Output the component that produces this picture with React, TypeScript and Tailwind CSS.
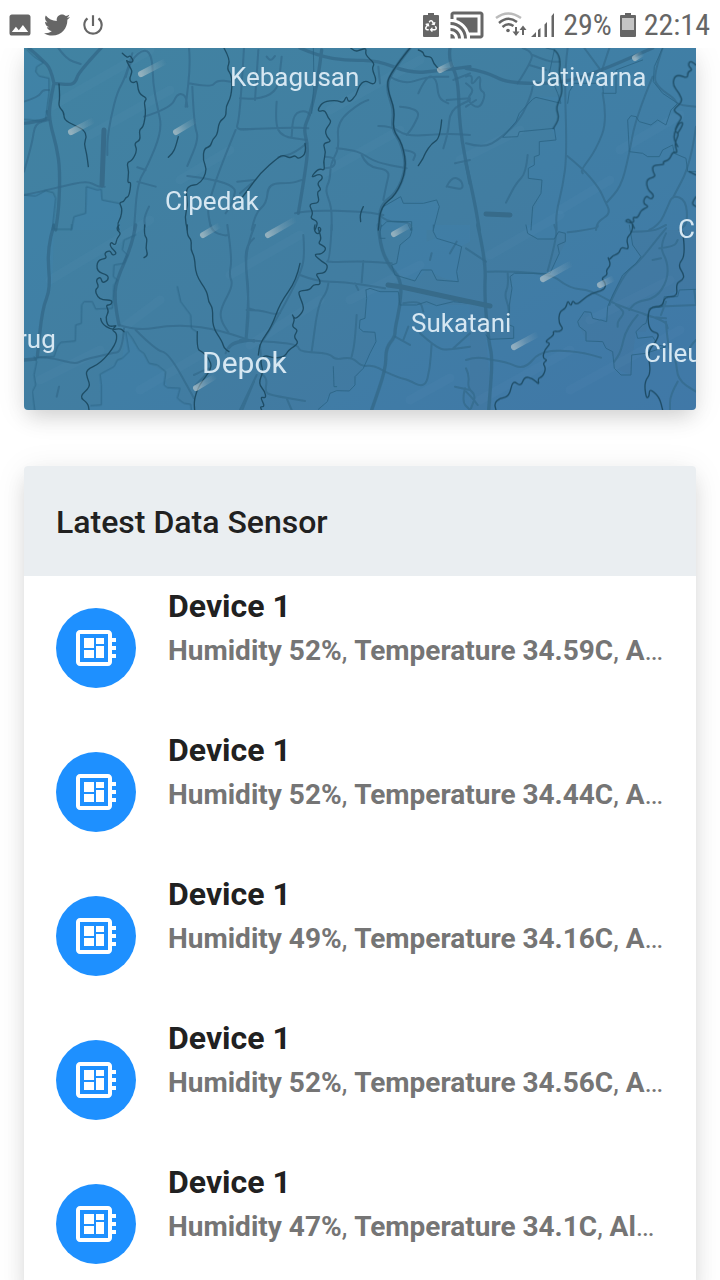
import { MdCastConnected, MdDeveloperBoard, MdImage, MdPowerSettingsNew } from "react-icons/md";
import { FaRecycle, FaTwitter } from "react-icons/fa";

type Tile = {
  x: number;
  y: number;
  areas: string[];
  roads: string[];
  lanes: string[];
  borders: string[];
  rivers: string[];
};

// Each tile holds its line work in thirds of a map unit, measured from the tile's corner.
const tiles: Tile[] = [
  {
    x: 24,
    y: 40,
    areas: [
      "M0 30L30 50L58 70L38 80L35 95L45 108L75 115L75 160L65 238L0 238Z",
      "M0 465L60 455L95 470L92 570L0 570Z",
      "M142 570L150 530L185 520L187 440L232 448L234 480L285 490L290 570Z",
    ],
    roads: [
      "M235 20L165 95L155 125L140 135L90 130",
      "M90 130L80 85L55 60L15 24",
      "M90 130L75 200L78 250L98 320L108 390L105 500L95 570",
      "M0 250L80 240L70 215",
    ],
    lanes: [
      "M305 112L318 60L365 24L385 55L387 130L400 200L415 270L370 380L340 430L330 570",
      "M100 20L125 57L170 72",
      "M0 185L45 170L55 150L75 150M0 395L25 310L32 250L75 240",
      "M325 40L305 112L280 155L260 235L250 300L250 345",
      "M360 230L440 205L460 160L485 165L490 200M495 24L500 70L485 200",
      "M495 130L560 143L580 120L620 125M505 140L510 255L525 295L490 378",
      "M0 465L50 455L110 440L190 422L220 440L242 440",
      "M340 382L365 390M340 425L395 440M375 500L360 530L363 560",
      "M660 24L655 110L645 240L635 270L690 267M635 270L590 380L560 470L550 510L560 560",
      "M490 408L640 425L625 490L605 520M640 425L690 420",
    ],
    borders: [
      "M8 28L30 50L58 68L38 80L35 95L45 108L75 115L75 160L65 238L50 243L0 238",
      "M142 570L150 530L185 520L187 440L220 450L232 448L234 480L285 490",
      "M0 465L35 468L65 452L88 458L95 475L85 570",
    ],
    rivers: [
      "M295 40L310 55L318 45L330 65L315 68L305 58L320 85L325 95L315 120L328 130L340 120L343 160L370 175L360 185L365 210L363 235L357 262L345 270L350 300L330 310L340 330L325 362L308 368L315 395L310 430L322 425L315 470L305 472L300 485L285 488L295 505L290 535L280 550L285 570",
      "M105 132L108 170L103 200L120 215L120 240L150 255L180 270L188 290L180 310L188 340L193 380",
      "M600 24L620 60L608 85L625 110L622 170L605 200L607 230L585 245L580 285L565 298L560 320L540 325L537 360L548 385L540 415L520 435L500 435L485 450L492 495L482 530L490 570",
      "M463 290L455 322L445 340L433 352",
    ],
  },
  {
    x: 240,
    y: 40,
    areas: ["M420 570L430 500L482 470L490 490L590 480L598 500L585 570Z"],
    roads: [
      "M180 24L235 48L320 62L410 60L510 100L600 92L690 80",
      "M245 30L235 115L210 225L190 265L205 320L195 400L175 520",
      "M510 24L450 100L440 150L463 210L455 265L485 310L500 385L470 460L420 495L418 570",
      "M630 24L625 60L655 115L658 260L690 430",
    ],
    lanes: [
      "M165 520L200 510L370 515L430 525",
      "M0 175L110 185L125 50M110 185L105 250L125 290L200 300M55 30L45 180M80 50L90 65L105 48M0 268L150 262L205 265",
      "M210 225L200 210L160 220L155 290M200 310L165 340L115 352",
      "M385 180L365 185L290 245L298 325L272 370L270 420L255 450L275 500L275 570",
      "M290 325L335 330L365 340L410 368L500 385M365 345L380 380L450 390L440 430L430 480",
      "M255 350L285 350L285 380L255 385M450 110L490 135L560 110L625 110M480 200L545 205L520 260L500 285M535 160L560 105L590 115L595 175L625 190",
      "M415 258L455 258L500 290L620 280L690 285M490 330L530 335L520 360M610 325L625 280L630 210L690 180",
      "M640 120L690 100M620 180L690 175M620 440L635 410L665 420L670 450L625 440M415 80L420 130M645 370L690 360",
      "M35 570L45 520L80 490L85 430L155 430L185 420M0 460L35 430",
      "M420 525L435 545L510 545L515 570",
    ],
    borders: [
      "M220 24L222 130L215 220",
      "M430 500L482 470L490 490L550 490L590 480L598 500L580 570",
      "M425 560L440 545L515 545L515 570",
    ],
    rivers: [
      "M332 24L345 35L360 30L380 24L375 45L405 70L395 85L410 120L400 135L375 120L355 140L350 165L325 190L320 165L310 190L290 180L250 185L235 205L235 215L255 210L265 235L275 245L255 270L260 290L275 305L248 310L258 335L250 365L255 392L235 385L210 415L240 400L250 415L230 430L245 450L230 455L240 490L205 490L220 520L210 535L235 545L225 570",
      "M510 24L445 105L442 148L465 210L457 268L488 312L500 388L468 465L422 500L415 570",
      "M535 30L550 35L552 50L575 50L580 70L600 90",
      "M605 240L600 295L575 310L555 340L550 355L535 377",
      "M195 310L200 340L175 358L165 345L150 355L130 345L115 352L60 400L20 455L0 480",
      "M370 500L360 520L362 545",
    ],
  },
  {
    x: 466,
    y: 40,
    areas: [
      "M110 290L155 240L200 170L280 185L280 240L255 265L270 300L220 305L220 350L185 380L190 415L228 420L225 460L200 520L195 570L690 570L690 24L590 24L300 24L300 170L200 170Z",
    ],
    roads: [
      "M0 85L60 95L125 130L280 130L385 100L560 24",
      "M0 370L25 480L40 570",
    ],
    lanes: [
      "M355 24L400 85M430 24L405 100",
      "M590 24L560 110L580 145L625 175L635 195L690 200",
      "M155 130L200 60L195 35L170 24M200 45L245 65L280 65M190 75L240 90",
      "M305 24L295 90L303 345L290 440L270 520L272 570",
      "M300 345L350 385L400 445L415 480L435 520L395 545L390 570",
      "M410 160L425 240L390 330L345 390L350 400",
      "M560 110L510 230L488 350L465 440L420 490",
      "M0 310L50 325L105 295L165 235L195 165L200 140",
      "M185 345L180 400L150 430L120 488",
      "M0 110L20 100L15 140L45 100L40 150L60 160L40 210L0 180L25 150L0 130M0 200L30 180",
      "M550 570L580 555L605 500L620 465L660 480L665 550L640 570M690 260L675 370L620 475",
    ],
    borders: [
      "M240 24L265 30L250 100L275 160L285 190L210 172L200 178L160 220L150 245L110 292L155 290L160 275L265 265L270 300L220 305L220 345L205 350L205 375L187 385L187 415L228 420L225 460L200 500L195 570",
      "M305 190L310 155L325 130L410 130L412 160L450 160L450 90L530 60",
      "M510 230L495 227L485 240L490 335L530 340L545 350L580 350L590 330L620 315L625 340L660 355L665 395L690 395",
      "M510 230L520 245L555 255L575 240L600 255L615 210L635 190L590 160L562 125L565 80L590 24",
    ],
    rivers: [
      "M265 30L278 40L283 75L278 95L290 150L280 180L270 205L280 235L262 265",
      "M690 75L675 60L665 75L680 90L665 95L665 115L640 105L625 110L620 135L640 160L650 185L625 205L625 215L650 230L635 250L625 275L640 280L625 310L635 340L620 335L610 360L590 365L595 375L560 375L560 395L570 410L540 418L545 450L565 465L555 480L540 465L530 490L550 500L525 510L515 535L500 530L505 550L475 545L490 535L505 565",
      "M635 280L655 250L640 245L620 290L635 320",
      "M670 395L690 405M690 470L675 490L690 500",
    ],
  },
  {
    x: 24,
    y: 225,
    areas: [
      "M0 0L90 0L85 180L55 250L35 400L0 400Z",
      "M305 325L350 380L375 415L420 440L430 485L470 490L465 530L505 540L510 560L200 560L195 540L230 540L225 450L295 400Z",
    ],
    roads: [
      "M90 0L68 70L80 190L55 250L40 395",
      "M335 0L325 60L275 170L272 230L285 300",
      "M0 405L35 402",
    ],
    lanes: [
      "M285 300L340 318L440 300L560 307L690 350",
      "M335 315L395 375L435 385L510 520",
      "M300 310L295 380L260 385L175 405L155 418L90 400L40 395",
      "M610 0L625 100L615 150L628 180L590 250L590 285L615 325M690 40L665 60L665 130L675 190L665 340",
      "M560 0L565 20L600 32L615 30M615 370L625 355L690 345",
      "M655 555L690 470M105 485L98 515",
      "M510 450L560 425L555 440L515 480",
      "M605 385L615 350L690 345M675 250L690 255",
    ],
    borders: [
      "M335 30L300 45L295 75L310 90L300 115L270 120L268 155L280 165L270 180L265 250L215 252L205 230L180 230L173 240L172 295L155 300L154 348L110 352L100 365L90 395L70 395L35 400",
      "M305 320L315 380L295 400L280 405L270 425L228 448L232 480L232 540L200 542",
      "M310 320L325 340L345 375L360 385L375 415L400 420L425 440L420 480L430 488L468 490L460 520L480 535L500 538L502 555",
      "M90 0L90 13L143 13L143 0",
      "M30 395L38 410L30 450L35 480L25 500L32 555",
      "M460 185L470 230L500 270L502 310L518 320",
    ],
    rivers: [
      "M285 0L275 12L292 25L278 40L275 62L260 50L258 65L280 85L265 92L258 75L240 85L250 100L220 105L218 140L252 150L253 165L235 175L230 155L215 165L225 185L213 195L220 215L235 225L265 225L262 240L245 240L255 260L245 275L250 300L262 305L280 300L262 315L280 325L275 360L230 415L185 435L190 460L200 485L165 515L192 535L195 555",
      "M230 280L232 295L262 315L290 310L300 320",
      "M362 0L360 30L370 40L365 70L372 90L360 98",
      "M490 0L488 30L503 45L500 75L512 95L515 150L550 200L553 230L567 250L565 305L595 350L600 370L615 380",
      "M520 320L518 372L535 380L555 400L565 430L525 480L510 525L512 555",
    ],
  },
  {
    x: 240,
    y: 225,
    areas: [
      "M420 0L510 0L510 30L480 60L470 115L455 130L490 155L530 165L560 135L610 160L655 170L660 65L690 50L690 0L580 0L585 40L560 50L560 10Z",
      "M378 195L475 200L480 240L690 240L690 555L240 555L265 510L290 497L330 497L365 430L405 350L405 320L360 320L358 285L378 280Z",
    ],
    roads: [
      "M415 0L420 60L445 120L485 165L480 245L465 310L465 335L437 370L438 430L395 555",
    ],
    lanes: [
      "M190 30L195 90L180 150L120 265L70 345",
      "M275 0L270 105L255 112L370 108L455 115M180 150L230 170L310 170L435 190M370 108L365 172M345 175L355 195",
      "M45 0L20 60L18 150L28 250L20 340M20 255L60 255L100 268L120 265M0 345L100 350L175 360L178 380L270 385L285 405L335 395L365 425L400 420L435 440",
      "M265 175L262 200L235 235L215 380M350 270L345 350L335 395",
      "M435 440L480 460L500 463L555 490L570 430L575 355M465 335L510 360M490 345L505 305M540 325L590 370L625 375L690 365M640 370L690 325",
      "M60 360L65 410L55 440L82 460L75 500L90 510L195 528M140 520L155 555",
      "M0 555L50 450M575 85L570 105M630 85L650 50M645 485L690 495M675 490L665 530L690 555M490 235L540 225L550 260",
    ],
    borders: [
      "M505 0L515 20L510 35L480 60L470 115L455 120L465 150L525 168L545 135L575 135L590 165L655 170L650 140L665 65L640 55L590 40L580 20L580 0",
      "M378 195L390 190L420 200L475 200L480 240L530 240L560 230L590 242L640 230L690 235",
      "M378 195L380 220L375 280L360 285L358 310L370 320L405 322L408 350L390 385L370 430L345 455L345 480L328 498L290 497L270 505L262 530L235 553",
      "M280 425L282 485L290 485",
      "M425 0L420 20L420 40L435 40",
    ],
    rivers: [
      "M225 0L220 15L235 30L245 10L232 5L245 40L235 55L245 60L260 70L245 88L220 87L245 110L265 120L255 145L225 145L240 165L240 180L220 178L210 195L180 197L175 205L190 240L190 260L165 285L155 265L165 285L155 305L175 315L160 335L178 355L145 375L135 395L100 400L75 390L60 405L70 440L55 475L75 500L78 520L60 515L75 545L60 545L65 555",
      "M180 115L170 165L120 235L95 305L60 355L55 390",
    ],
  },
  {
    x: 466,
    y: 225,
    areas: [
      "M180 0L185 25L220 45L270 40L275 20L300 22L300 50L250 140L140 145L132 280L145 340L60 345L80 555L690 555L690 190L635 195L595 215L590 245L550 245L540 320L510 320L500 390L495 450L445 430L445 400L410 350L360 345L335 290L360 260L380 280L420 290L430 230L470 150L525 100L500 60L490 0Z",
    ],
    roads: ["M35 0L60 110L55 210L68 350L80 400L68 555"],
    lanes: [
      "M65 140L245 138L310 190L375 195L450 240L530 265L600 290L605 310",
      "M0 225L45 235",
      "M600 25L580 65L605 110L605 165L570 220L510 230L490 255",
      "M245 138L275 30L265 0M0 70L60 110M305 22L395 10L395 0",
      "M125 145L128 180L115 210L130 250L125 275M80 405L120 410L175 435L225 375L340 380L405 398",
      "M450 240L465 250L475 265L455 290L455 305M515 270L480 310L465 380L445 410M430 240L470 150L520 110L575 40L600 10",
      "M560 105L585 100M580 70L625 65L635 45M565 245L690 240M600 230L585 270M600 290L605 370L630 400L635 465L690 500M635 470L612 510L612 555",
      "M530 265L545 275L600 280M500 20L560 20L600 0M685 195L690 240M690 345L665 370L670 400",
      "M0 405L30 395L80 405M0 430L10 450L5 490L30 510L15 550M0 500L20 520L35 540",
    ],
    borders: [
      "M180 0L185 25L215 42L265 42L278 20L298 25L298 50L275 60L280 85L252 145L145 145L132 155L138 190L130 240L130 300L143 305L143 340L70 343L60 330",
      "M490 0L500 60L525 95L510 115L470 150L440 210L425 245L422 290L405 285L400 285L380 280L375 262L355 260L335 290L340 305L360 320L360 348L410 350L420 370L440 380L445 430L465 450L495 450L497 390L540 385L600 365L575 360L560 335L515 340L510 320L530 300L540 295L550 250L590 245L595 215L635 215L640 195L690 193",
    ],
    rivers: [
      "M500 0L500 20L480 40L490 75L465 65L460 85L440 92L430 105L425 95L435 120L420 135L425 150L405 160L420 175L415 195L375 205L350 225L330 240L320 225L315 245L305 225L300 250L280 260L278 295L292 310L280 320L260 318L265 330L235 350L255 355L235 375L230 400L245 405L230 415L240 430L230 455L215 460L220 480L200 460L175 455L165 485L140 465L130 515L100 520L85 535L90 555",
      "M650 20L660 90L635 120L655 150L650 165L630 175L635 215L595 215L590 245L550 245L545 290L555 320L580 325L570 350L545 380L555 445L535 470L540 520L550 515L550 490L580 515L590 555",
    ],
  },
];

// Rounds the corners of "M x y L x y ..." paths by curving between segment midpoints.
function smooth(paths: string[]) {
  return paths
    .join("")
    .split("M")
    .filter(Boolean)
    .map((line) => {
      const points = line.split("L").map((pair) => pair.trim().split(" ").map(Number));
      const last = points[points.length - 1];
      let d = `M${points[0][0]} ${points[0][1]}`;
      for (let i = 1; i < points.length - 1; i++) {
        const [x, y] = points[i];
        const [nx, ny] = points[i + 1];
        d += `Q${x} ${y} ${(x + nx) / 2} ${(y + ny) / 2}`;
      }
      return `${d}L${last[0]} ${last[1]}`;
    })
    .join("");
}

type Layer = {
  key: "lanes" | "roads" | "borders" | "rivers";
  color: string;
  width: number;
  opacity: number;
  curved: boolean;
};

const layers: Layer[] = [
  { key: "lanes", color: "#346b8c", width: 6, opacity: 0.75, curved: true },
  { key: "roads", color: "#346a8a", width: 10, opacity: 0.8, curved: true },
  { key: "borders", color: "#2b6384", width: 3, opacity: 0.8, curved: false },
  { key: "rivers", color: "#1b485f", width: 4, opacity: 0.9, curved: true },
];

const gusts = [
  [141, 74, 166, 61],
  [71, 132, 94, 120],
  [176, 132, 196, 120],
  [203, 235, 220, 225],
  [268, 235, 296, 219],
  [394, 234, 412, 224],
  [440, 70, 454, 63],
  [543, 279, 572, 263],
  [600, 285, 614, 278],
  [514, 347, 538, 334],
  [196, 388, 216, 376],
  [635, 58, 643, 53],
];

const haze = [
  [52, 106, 150, 50], [50, 280, 150, 220], [90, 135, 170, 90], [120, 330, 160, 300], [230, 275, 300, 235],
  [320, 175, 400, 130], [250, 345, 320, 300], [410, 400, 450, 378], [460, 160, 520, 130], [490, 255, 560, 215],
  [560, 210, 610, 180], [480, 400, 570, 350], [570, 390, 680, 330], [590, 320, 670, 280], [330, 110, 420, 60],
  [180, 180, 230, 150], [40, 380, 100, 350], [620, 150, 680, 115], [350, 300, 420, 265], [140, 390, 200, 355],
];

const places = [
  { name: "Kebagusan", x: 230, y: 86, major: false },
  { name: "Jatiwarna", x: 532, y: 86, major: false },
  { name: "Cipedak", x: 165, y: 210, major: false },
  { name: "Sukatani", x: 411, y: 332, major: false },
  { name: "Depok", x: 202, y: 373, major: true },
  { name: "rug", x: 18, y: 348, major: false },
  { name: "Cileu", x: 644, y: 362, major: false },
  { name: "C", x: 678, y: 238, major: false },
];

const readings = [
  { humidity: "52%", temperature: "34.59C" },
  { humidity: "52%", temperature: "34.44C" },
  { humidity: "49%", temperature: "34.16C" },
  { humidity: "52%", temperature: "34.56C" },
  { humidity: "47%", temperature: "34.1C" },
];

function WeatherMap() {
  return (
    <svg viewBox="24 48 672 362" className="block w-full rounded-b" role="img" aria-label="Wind map around Depok">
      <defs>
        <linearGradient id="base" x1="0" y1="0" x2="1" y2="1">
          <stop offset="0" stopColor="#4183a2" />
          <stop offset="0.55" stopColor="#417da1" />
          <stop offset="1" stopColor="#4175a3" />
        </linearGradient>
        {gusts.map(([x1, y1, x2, y2], i) => (
          <linearGradient key={i} id={`gust${i}`} gradientUnits="userSpaceOnUse" x1={x1} y1={y1} x2={x2} y2={y2}>
            <stop offset="0" stopColor="#c8d0d0" stopOpacity="0.6" />
            <stop offset="0.5" stopColor="#c8d0d0" stopOpacity="0.22" />
            <stop offset="1" stopColor="#c8d0d0" stopOpacity="0" />
          </linearGradient>
        ))}
      </defs>
      <rect x="24" y="48" width="672" height="362" fill="url(#base)" />
      <g fill="#4285b4" opacity="0.22">
        {tiles.map((tile, i) => (
          <path key={i} transform={`translate(${tile.x} ${tile.y}) scale(0.3333)`} d={tile.areas.join("")} />
        ))}
      </g>
      <g stroke="#6fa5c4" strokeOpacity="0.06" strokeWidth="9" strokeLinecap="round">
        {haze.map(([x1, y1, x2, y2], i) => (
          <line key={i} x1={x1} y1={y1} x2={x2} y2={y2} />
        ))}
      </g>
      {layers.map((layer) => (
        <g
          key={layer.key}
          fill="none"
          stroke={layer.color}
          strokeWidth={layer.width}
          opacity={layer.opacity}
          strokeLinejoin="round"
          strokeLinecap="round"
        >
          {tiles.map((tile, i) => (
            <path
              key={i}
              transform={`translate(${tile.x} ${tile.y}) scale(0.3333)`}
              d={layer.curved ? smooth(tile[layer.key]) : tile[layer.key].join("")}
            />
          ))}
        </g>
      ))}
      <path d="M104 130L102 185M486 214L510 215M388 285L402 287L466 301L490 306" fill="none" stroke="#376b8a" strokeWidth="5" strokeLinecap="round" />
      {gusts.map(([x1, y1, x2, y2], i) => (
        <line key={i} x1={x1} y1={y1} x2={x2} y2={y2} stroke={`url(#gust${i})`} strokeWidth="6" strokeLinecap="round" />
      ))}
      <g fill="#d6e7f2" fontFamily="Roboto, sans-serif">
        {places.map((place) => (
          <text key={place.name} x={place.x} y={place.y} fontSize={place.major ? 30 : 26}>
            {place.name}
          </text>
        ))}
      </g>
    </svg>
  );
}

function BatterySaverIcon() {
  return (
    <svg viewBox="0 0 16 24" className="h-6 w-4" aria-hidden="true">
      <path d="M5 0h6v2h4q1 0 1 1v20q0 1-1 1H1q-1 0-1-1V3q0-1 1-1h4z" fill="#666" />
      <FaRecycle x="2" y="7" size={12} color="#fff" />
    </svg>
  );
}

function WifiIcon() {
  return (
    <svg viewBox="0 0 32 26" className="h-6.5 w-8" fill="none" stroke="#666" aria-hidden="true">
      <path d="M1 6Q13-3 26 6" stroke="#bbb" strokeWidth="2.400" />
      <path d="M4 11Q13 3 22 10M7.500 15Q13 10 18.500 14" strokeWidth="2.400" />
      <circle cx="13" cy="18.500" r="1.800" fill="#666" stroke="none" />
      <path d="M21 15v8M28 23v-8" strokeWidth="2" />
      <path d="M17.500 19.500h7L21 24zM24.500 18h7L28 13.500z" fill="#666" stroke="none" />
    </svg>
  );
}

function SignalIcon() {
  return (
    <svg viewBox="0 0 24 24" className="size-6" fill="#666" aria-hidden="true">
      <path d="M0 24l5-5v5zM7 17l2.500-2v9H7zM13.500 11.500L16 9v15h-2.500zM20.500 3L23 0v24h-2.500z" />
    </svg>
  );
}

function BatteryIcon() {
  return (
    <svg viewBox="0 0 16 24" className="h-6 w-4" aria-hidden="true">
      <path d="M5 0h6v2h4q1 0 1 1v20q0 1-1 1H1q-1 0-1-1V3q0-1 1-1h4z" fill="#666" />
      <path d="M2 5h12v12H2z" fill="#c4c4c4" />
    </svg>
  );
}

function StatusBar() {
  return (
    <header className="z-10 flex h-12 shrink-0 items-center justify-between bg-white pt-0.5 pr-2.5 pl-1.5 text-[#666]">
      <div className="flex items-center gap-2.5">
        <MdImage className="size-7" />
        <FaTwitter className="size-6.5" />
        <MdPowerSettingsNew className="size-6.5" />
      </div>
      <div className="flex items-center font-['Roboto_Condensed',Roboto,sans-serif] text-[30px] leading-8">
        <BatterySaverIcon />
        <MdCastConnected className="mx-2.5 size-9" />
        <WifiIcon />
        <span className="ml-1">
          <SignalIcon />
        </span>
        <span className="mx-2">29%</span>
        <BatteryIcon />
        <span className="ml-2">22:14</span>
      </div>
    </header>
  );
}

export default function App() {
  return (
    <div className="flex h-screen flex-col overflow-hidden bg-white font-[Roboto,sans-serif] text-[#212121]">
      <StatusBar />
      <main className="flex min-h-0 flex-1 flex-col gap-14 overflow-y-auto px-6 [scrollbar-width:none]">
        <section className="shrink-0 rounded-b shadow-[0_10px_20px_-4px_rgba(0,0,0,0.14),0_4px_32px_rgba(0,0,0,0.08)]">
          <WeatherMap />
        </section>
        <section className="shrink-0 rounded bg-white shadow-[0_10px_20px_-4px_rgba(0,0,0,0.14),0_4px_32px_rgba(0,0,0,0.08)]">
          <h2 className="rounded-t bg-[#eaeef1] px-8 pt-8 pb-[30px] text-[32px] leading-12 font-medium">Latest Data Sensor</h2>
          <ul>
            {readings.map((reading, i) => (
              <li key={i} className="flex h-36 items-start gap-8 px-8">
                <span className="mt-8 flex size-20 shrink-0 items-center justify-center rounded-full bg-[#1e90ff] text-white">
                  <MdDeveloperBoard className="size-12" />
                </span>
                <div className="min-w-0 flex-1 pt-1.5">
                  <h3 className="text-[32px] leading-12 font-bold">Device 1</h3>
                  <p className="truncate text-[28px] leading-[42px] text-[#757575]">
                    <b>Humidity {reading.humidity}</b>, <b>Temperature {reading.temperature}</b>, <b>Altitude 90.5m</b>
                  </p>
                </div>
              </li>
            ))}
          </ul>
        </section>
      </main>
    </div>
  );
}
